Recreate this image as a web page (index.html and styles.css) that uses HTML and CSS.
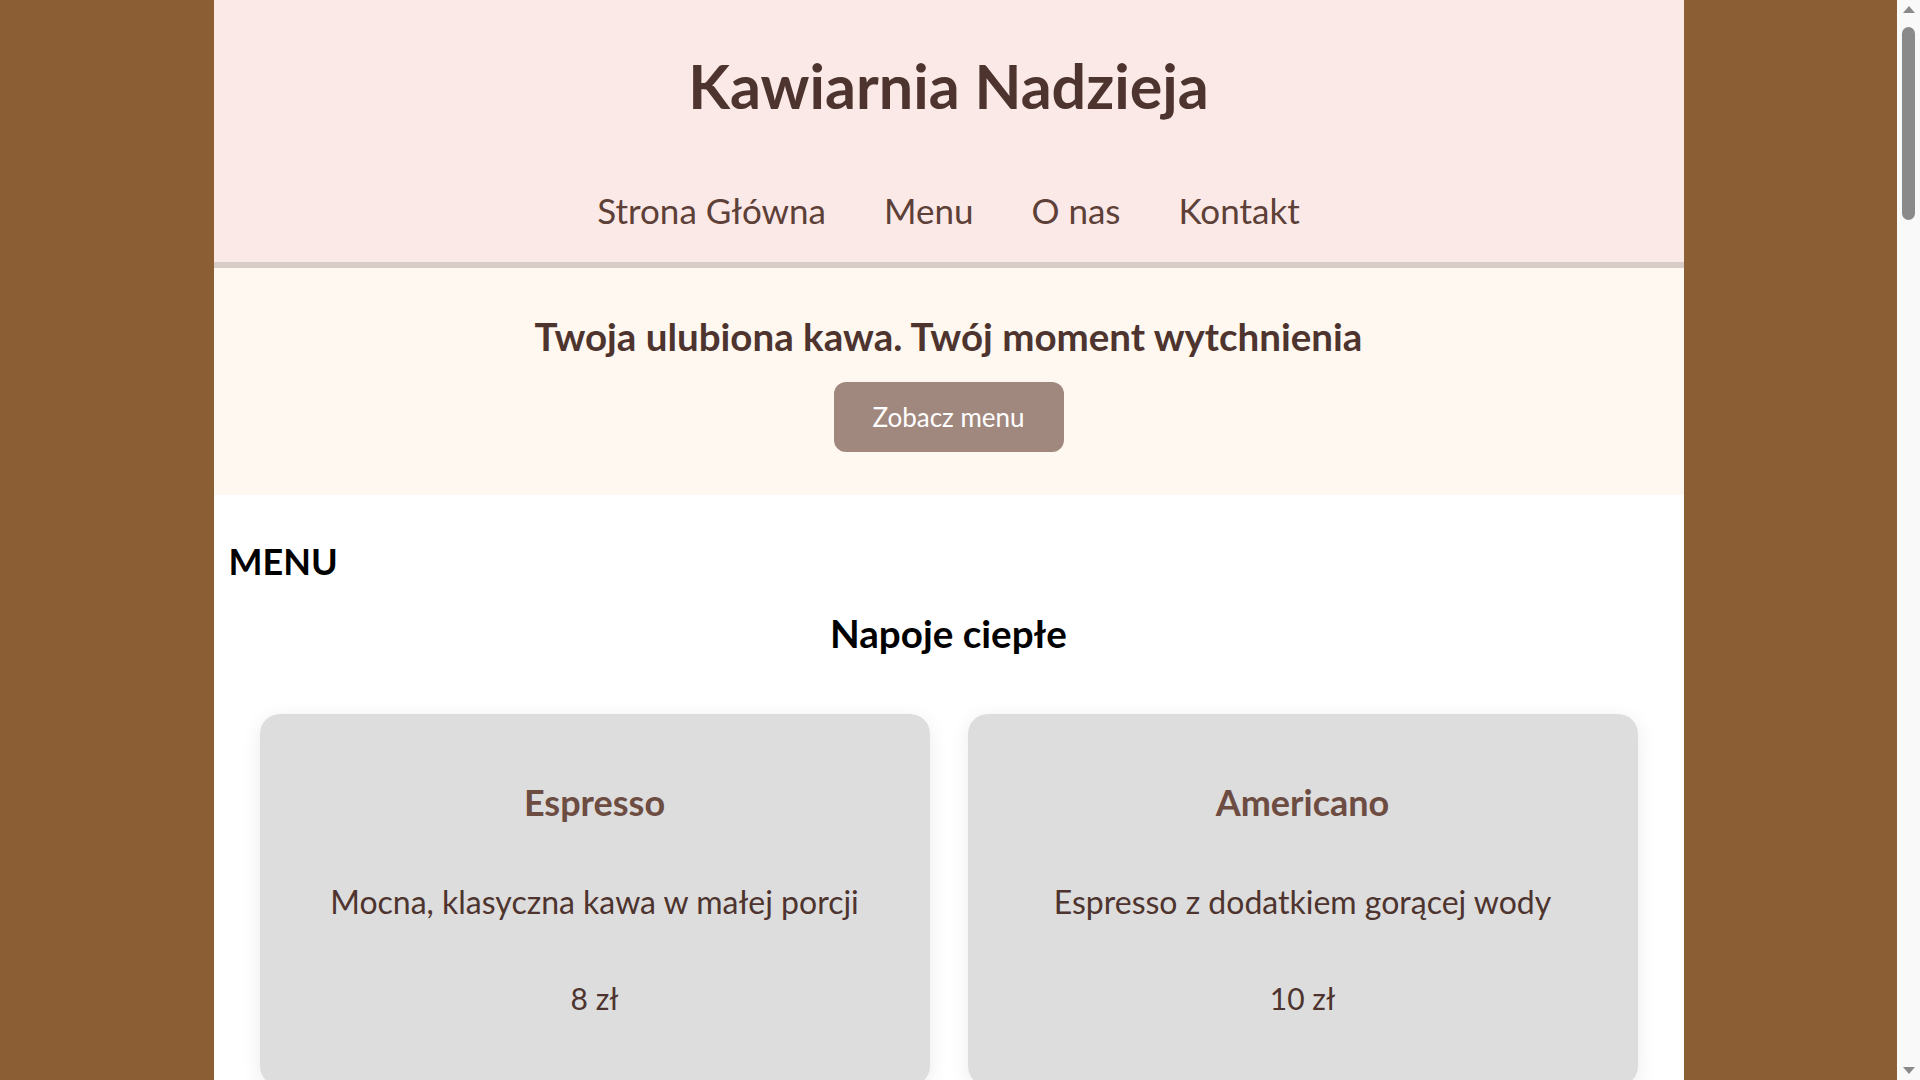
FILE: index.html
```html
<!DOCTYPE html>
<html lang="pl">
<head>
<meta charset="utf-8">
<title>Kawiarnia Nadzieja</title>
<link rel="stylesheet" href="styles.css">
</head>
<body>
<div class="page">
  <header class="site-header">
    <h1 class="site-title">Kawiarnia Nadzieja</h1>
    <nav class="main-nav">
      <a href="#">Strona Główna</a>
      <a href="#">Menu</a>
      <a href="#">O nas</a>
      <a href="#">Kontakt</a>
    </nav>
  </header>

  <section class="hero">
    <h2 class="hero-title">Twoja ulubiona kawa. Twój moment wytchnienia</h2>
    <a class="btn" href="#">Zobacz menu</a>
  </section>

  <main class="menu">
    <h2 class="menu-heading">MENU</h2>

    <h3 class="category">Napoje ciepłe</h3>
    <div class="cards">
      <div class="card">
        <h4 class="card-title">Espresso</h4>
        <p class="card-desc">Mocna, klasyczna kawa w małej porcji</p>
        <p class="card-price">8 zł</p>
      </div>
      <div class="card">
        <h4 class="card-title">Americano</h4>
        <p class="card-desc">Espresso z dodatkiem gorącej wody</p>
        <p class="card-price">10 zł</p>
      </div>
      <div class="card">
        <h4 class="card-title">Cappuccino</h4>
        <p class="card-desc">Espresso z mlekiem i mleczną pianką</p>
        <p class="card-price">12 zł</p>
      </div>
      <div class="card">
        <h4 class="card-title">Latte</h4>
        <p class="card-desc">Delikatna kawa z dużą ilością mleka</p>
        <p class="card-price">13 zł</p>
      </div>
    </div>

    <h3 class="category">Napoje zimne</h3>
    <div class="cards">
      <div class="card">
        <h4 class="card-title">Kawa mrożona</h4>
        <p class="card-desc">Schłodzona kawa z lodem</p>
        <p class="card-price">14 zł</p>
      </div>
      <div class="card">
        <h4 class="card-title">Lemoniada</h4>
        <p class="card-desc">Domowa lemoniada z miętą</p>
        <p class="card-price">11 zł</p>
      </div>
    </div>

    <h3 class="category">Desery</h3>
    <div class="cards">
      <div class="card">
        <h4 class="card-title">Sernik</h4>
        <p class="card-desc">Klasyczny sernik na kruchym spodzie</p>
        <p class="card-price">15 zł</p>
      </div>
      <div class="card">
        <h4 class="card-title">Szarlotka</h4>
        <p class="card-desc">Ciasto z jabłkami i cynamonem</p>
        <p class="card-price">14 zł</p>
      </div>
    </div>
  </main>
</div>

<div class="scrollbar" aria-hidden="true">
  <span class="sb-arrow sb-up"></span>
  <span class="sb-thumb"></span>
  <span class="sb-arrow sb-down"></span>
</div>
</body>
</html>
```
FILE: styles.css
```css
html, body {
  margin: 0;
  padding: 0;
}

body {
  background: #8b5f33;
  font-family: "Lato", "Open Sans", sans-serif;
  color: #4e342e;
  padding-right: 23px;
}

.page {
  width: 1470px;
  margin: 0 auto;
  background: #ffffff;
}

.site-header {
  background: #fbe9e7;
  border-bottom: 6px solid #d7ccc8;
  padding: 53px 0 34px;
  text-align: center;
}

.site-title {
  margin: 0;
  font-size: 61px;
  line-height: 66px;
  font-weight: 700;
  color: #4e342e;
}

.main-nav {
  margin-top: 73px;
  display: flex;
  justify-content: center;
  gap: 58px;
  line-height: 36px;
}

.main-nav a {
  color: #5d4037;
  text-decoration: none;
  font-size: 35px;
}

.hero {
  background: #fff8f1;
  padding: 46px 0 43px;
  display: flex;
  flex-direction: column;
  align-items: center;
}

.hero-title {
  margin: 0 0 24px;
  font-size: 38.5px;
  line-height: 44px;
  font-weight: 700;
  color: #4e342e;
}

.btn {
  display: block;
  width: 230px;
  box-sizing: border-box;
  padding: 20px 0;
  line-height: 30px;
  text-align: center;
  background: #a1887f;
  color: #ffffff;
  text-decoration: none;
  font-size: 26px;
  border-radius: 12px;
}

.menu {
  padding: 45px 15px 80px;
}

.menu-heading {
  margin: 0;
  font-size: 36px;
  line-height: 42px;
  font-weight: 700;
  color: #000000;
}

.category {
  margin: 30px 0 60px;
  text-align: center;
  font-size: 38.6px;
  line-height: 42px;
  font-weight: 700;
  color: #000000;
}

.cards {
  display: grid;
  grid-template-columns: 1fr 1fr;
  gap: 38px;
  padding: 0 31px;
  margin-bottom: 60px;
}

.card {
  background: #dddddd;
  border-radius: 20px;
  box-shadow: 0 4px 20px rgba(0, 0, 0, 0.08);
  padding: 69px 20px 70px;
  text-align: center;
}

.card-title {
  margin: 0;
  font-size: 36px;
  line-height: 38px;
  font-weight: 700;
  color: #6d4c41;
}

.card-desc {
  margin: 63px 0 0;
  font-size: 32px;
  line-height: 36px;
  color: #4e342e;
}

.card-price {
  margin: 60px 0 0;
  font-size: 30px;
  line-height: 36px;
  color: #4e342e;
}

.scrollbar {
  position: fixed;
  top: 0;
  right: 0;
  width: 23px;
  height: 100vh;
  background: #f9f9f9;
}

.sb-thumb {
  position: absolute;
  top: 27px;
  left: 5px;
  width: 13px;
  height: 193px;
  border-radius: 7px;
  background: #8a8a8a;
}

.sb-arrow {
  position: absolute;
  left: 6px;
  width: 0;
  height: 0;
  border-left: 6px solid transparent;
  border-right: 6px solid transparent;
}

.sb-up {
  top: 6px;
  border-bottom: 7px solid #8a8a8a;
}

.sb-down {
  bottom: 6px;
  border-top: 7px solid #8a8a8a;
}
```
